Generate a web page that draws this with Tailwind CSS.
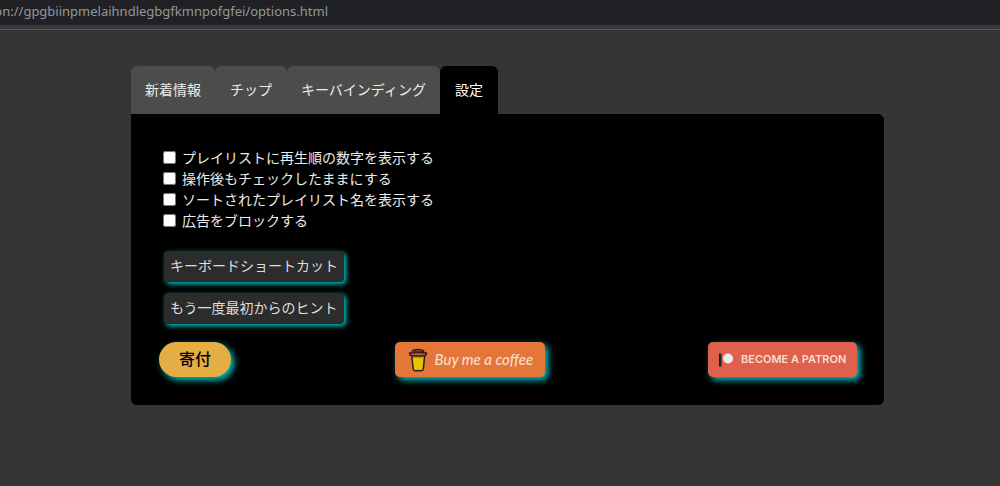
<!DOCTYPE html>
<html lang="ja">
<head>
<meta charset="utf-8">
<meta name="viewport" content="width=device-width, initial-scale=1">
<title>設定</title>
<script src="https://cdn.jsdelivr.net/npm/@tailwindcss/browser@4"></script>
</head>
<body class="min-h-screen bg-[#353535] font-['Noto_Sans_CJK_JP',sans-serif] text-sm text-[#ececec]">
<header class="flex h-[30px] flex-col border-b border-[#56575b] bg-[#37373b]">
  <div class="h-[25px] bg-[#202124]">
    <div class="flex w-[328px] justify-end font-['Noto_Sans',sans-serif] text-[13px] leading-[23px] whitespace-nowrap text-[#94979a]">on://gpgbiinpmelaihndlegbgfkmnpofgfei/options.html</div>
  </div>
</header>
<main class="mt-9 mr-[116px] ml-[131px]">
  <nav class="flex">
    <button class="h-12 rounded-t-md bg-[#4c4c4a] px-[14px] pb-[2px]">新着情報</button>
    <button class="h-12 rounded-t-md bg-[#4c4c4a] px-[15px] pb-[2px]">チップ</button>
    <button class="h-12 rounded-t-md bg-[#4c4c4a] px-[14px] pb-[2px]">キーバインディング</button>
    <button class="h-12 rounded-t-md bg-black px-[15px] pb-[2px] text-white">設定</button>
  </nav>
  <section class="rounded-md rounded-tl-none bg-black pt-[33px] pr-[27px] pb-7 pl-7">
    <div class="flex flex-col items-start pl-1 leading-[21px]">
      <label class="flex items-center gap-[6px]"><input type="checkbox" class="size-[13px]">プレイリストに再生順の数字を表示する</label>
      <label class="flex items-center gap-[6px]"><input type="checkbox" class="size-[13px]">操作後もチェックしたままにする</label>
      <label class="flex items-center gap-[6px]"><input type="checkbox" class="size-[13px]">ソートされたプレイリスト名を表示する</label>
      <label class="flex items-center gap-[6px]"><input type="checkbox" class="size-[13px]">広告をブロックする</label>
    </div>
    <div class="mt-5 flex flex-col items-start gap-[11px] pl-[5px]">
      <button class="h-[31px] rounded-[4px] bg-[#2c2c2c] px-[6px] pb-1 text-[#dedede] shadow-[2px_2px_5px_#00c8c8]">キーボードショートカット</button>
      <button class="h-[31px] rounded-[4px] bg-[#2c2c2c] px-[6px] pb-1 text-[#dedede] shadow-[2px_2px_5px_#00c8c8]">もう一度最初からのヒント</button>
    </div>
    <div class="mt-[18px] flex justify-between">
      <a href="#" class="flex h-[35px] items-center rounded-full bg-[#e5ae45] px-5 pb-1 text-base font-medium text-black shadow-[3px_3px_6px_#00c8c8]">寄付</a>
      <a href="#" class="flex h-[35px] w-[150px] items-center gap-[7px] rounded-[5px] bg-[#e5763a] pl-[13px] font-['Lato',cursive] text-[15px] font-medium whitespace-nowrap text-[#f5dfce] italic shadow-[3px_3px_6px_#00c8c8]">
        <svg class="h-6 w-5 shrink-0" viewBox="0 0 20 24" fill="none" stroke="#35201a" stroke-width="1.5" stroke-linejoin="round">
          <path d="M4 7.500 5.500 22.500h9L16.500 7.500z" fill="#e5763a" stroke="none"/>
          <path d="m4.800 10 1 10.500c.1.900.6 1.300 1.400 1.300h6c.8 0 1.300-.4 1.400-1.300L15.700 10z" fill="#e3c500" stroke="none"/>
          <path d="M3.700 8 5.200 21c.1 1.200.8 1.800 1.800 1.800h6.500c1 0 1.700-.6 1.800-1.800L16.700 8"/>
          <path d="M1.500 5c2.500-.8 14.500-.8 17 0l-.5 2.200c-3 .9-13 .9-16 0z" fill="#c2602f"/>
          <path d="M4 4.200c.2-1.600 2-2.600 6-2.600s5.500.8 5.800 2c-3 .7-7 .6-9.600.2" fill="#a8502b"/>
        </svg>
        Buy me a coffee
      </a>
      <a href="#" class="flex h-[35px] w-[149px] items-center gap-[8px] rounded-[5px] bg-[#e0604d] pl-[11px] font-['Inter',sans-serif] text-[11px] font-semibold whitespace-nowrap text-[#f7dfd0] shadow-[3px_3px_6px_#00c8c8]">
        <svg class="h-[14px] w-[14px] shrink-0" viewBox="0 0 14 14"><path d="M0 .5h2.500v13H0z" fill="#16252a"/><circle cx="9" cy="5.500" r="5" fill="#ebebeb"/></svg>
        BECOME A PATRON
      </a>
    </div>
  </section>
</main>
</body>
</html>
